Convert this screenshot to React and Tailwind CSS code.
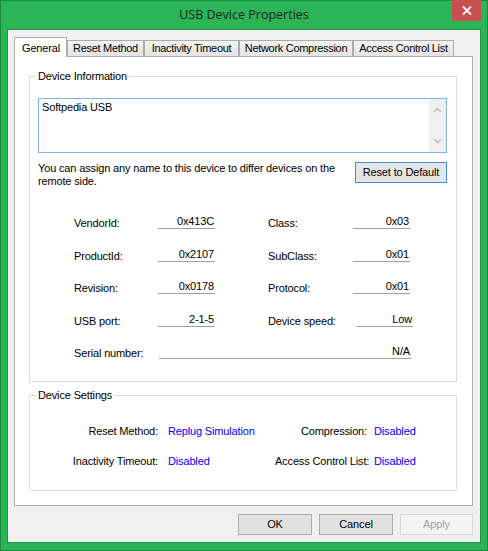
import React from 'react';

const ui = "font-['Liberation_Sans',Arial,sans-serif] text-[11px] leading-[13px] tracking-[-0.15px] text-black";

function Tab({ label, className, active }) {
  if (active) {
    return (
      <div className={`relative z-10 -mb-px h-[20px] border border-b-0 border-[#adadad] bg-white pl-[7px] pt-[4px] ${className}`}>
        {label}
      </div>
    );
  }
  return (
    <div className={`h-[16px] whitespace-nowrap border border-b-0 border-[#acacac] bg-gradient-to-b from-[#f2f2f2] to-[#e4e4e4] pt-[1px] text-center tracking-[-0.3px] ${className}`}>
      {label}
    </div>
  );
}

function Group({ title, className, children }) {
  return (
    <div className={`relative border border-[#dcdcdc] ${className}`}>
      <span className="absolute left-[6px] -top-[7px] bg-white px-[2px]">{title}</span>
      {children}
    </div>
  );
}

function Btn({ children, className }) {
  return (
    <button className={`h-[21px] border border-[#adadad] bg-[#e1e1e1] text-center ${className}`}>
      {children}
    </button>
  );
}

function Chevron({ up }) {
  return (
    <svg width="9" height="6" viewBox="0 0 9 6" className="mx-auto">
      <polyline
        points={up ? '1,5 4.5,1.5 8,5' : '1,1 4.5,4.5 8,1'}
        fill="none"
        stroke="#c2c2c2"
        strokeWidth="1.6"
      />
    </svg>
  );
}

function Row({ l1, v1, l2, v2, mt, shift }) {
  return (
    <div className={`flex items-start ${mt}`}>
      <div className="w-[84px] pt-[2px]">{l1}</div>
      <div className="w-[57px] border-b border-[#a0a0a0] pr-px text-right">{v1}</div>
      <div className="ml-[53px] w-[85px] pt-[2px]">{l2}</div>
      <div className={`w-[57px] border-b border-[#a0a0a0] pr-px text-right ${shift}`}>{v2}</div>
    </div>
  );
}

export default function App() {
  return (
    <div className={`flex h-[551px] w-[488px] flex-col bg-[#2bb556] shadow-[inset_0_0_0_1px_#1d8a3f] ${ui}`}>
      {/* Title bar */}
      <div className="grid h-[29px] grid-cols-[1fr_auto_1fr] items-center">
        <div />
        <div className="pb-[1px] font-['Open_Sans',sans-serif] text-[12.5px] tracking-normal text-[#222222]">USB Device Properties</div>
        <div className="flex h-full items-start justify-end">
          <div className="mr-[7px] flex h-[21px] w-[29px] items-center justify-center bg-[#c75050]">
            <svg width="10" height="9" viewBox="0 0 10 9">
              <path d="M1 0.5 L9 8.5 M9 0.5 L1 8.5" stroke="#ffffff" strokeWidth="1.8" />
            </svg>
          </div>
        </div>
      </div>

      {/* Client area */}
      <div className="mx-[7px] flex h-[514px] flex-col border border-[#1f9444] bg-[#f0f0f0]">
        {/* Tabs */}
        <div className="ml-[6px] mt-[7px] flex h-[19px] items-end">
          <Tab label="General" className="w-[53px]" active />
          <Tab label="Reset Method" className="w-[77px]" />
          <Tab label="Inactivity Timeout" className="w-[95px]" />
          <Tab label="Network Compression" className="w-[114px]" />
          <Tab label="Access Control List" className="w-[101px]" />
        </div>

        {/* Tab panel */}
        <div className="ml-[6px] flex h-[450px] w-[459px] flex-col border border-[#adadad] bg-white">
          <Group title="Device Information" className="ml-[14px] mt-[19px] h-[306px] w-[428px]">
            <div className="ml-[8px] mt-[21px] flex h-[55px] w-[409px] border border-[#7eb4ea]">
              <div className="flex-1 pl-[3px] pt-[2px]">Softpedia USB</div>
              <div className="flex w-[17px] flex-col justify-between bg-[#f0f0f0] py-[8px]">
                <Chevron up />
                <Chevron />
              </div>
            </div>

            <div className="ml-[8px] mt-[9px] flex w-[409px] items-start justify-between">
              <p>
                You can assign any name to this device to differ devices on the
                <br />
                remote side.
              </p>
              <button className="h-[21px] w-[92px] border border-[#3c8fdf] bg-[#e5e5e5] text-center">
                Reset to Default
              </button>
            </div>

            <div className="ml-[44px] mt-[27px]">
              <Row l1="VendorId:" v1="0x413C" l2="Class:" v2="0x03" mt="" shift="" />
              <Row l1="ProductId:" v1="0x2107" l2="SubClass:" v2="0x01" mt="mt-[18px]" shift="" />
              <Row l1="Revision:" v1="0x0178" l2="Protocol:" v2="0x01" mt="mt-[17px]" shift="" />
              <Row l1="USB port:" v1="2-1-5" l2="Device speed:" v2="Low" mt="mt-[18px]" shift="ml-[3px]" />
              <div className="mt-[17px] flex items-start">
                <div className="w-[85px] pt-[2px]">Serial number:</div>
                <div className="w-[252px] border-b border-[#a0a0a0] pr-px text-right">N/A</div>
              </div>
            </div>
          </Group>

          <Group title="Device Settings" className="ml-[14px] mt-[13px] h-[96px] w-[428px]">
            <div className="mt-[29px] flex whitespace-nowrap">
              <div className="w-[128px] text-right">Reset Method:</div>
              <div className="ml-[10px] w-[107px] text-[#0000ff]">Replug Simulation</div>
              <div className="w-[92px] text-right">Compression:</div>
              <div className="ml-[7px] text-[#0000ff]">Disabled</div>
            </div>
            <div className="mt-[17px] flex whitespace-nowrap">
              <div className="w-[128px] text-right">Inactivity Timeout:</div>
              <div className="ml-[10px] w-[107px] text-[#0000ff]">Disabled</div>
              <div className="w-[92px] text-right">Access Control List:</div>
              <div className="ml-[7px] text-[#0000ff]">Disabled</div>
            </div>
          </Group>
        </div>

        {/* Dialog buttons */}
        <div className="mt-[8px] flex justify-end gap-[7px] pr-[7px]">
          <Btn className="w-[74px]">OK</Btn>
          <Btn className="w-[74px]">Cancel</Btn>
          <button className="h-[21px] w-[73px] border border-[#d9d9d9] bg-[#f4f4f4] text-center text-[#a0a0a0]">
            Apply
          </button>
        </div>
      </div>
    </div>
  );
}
